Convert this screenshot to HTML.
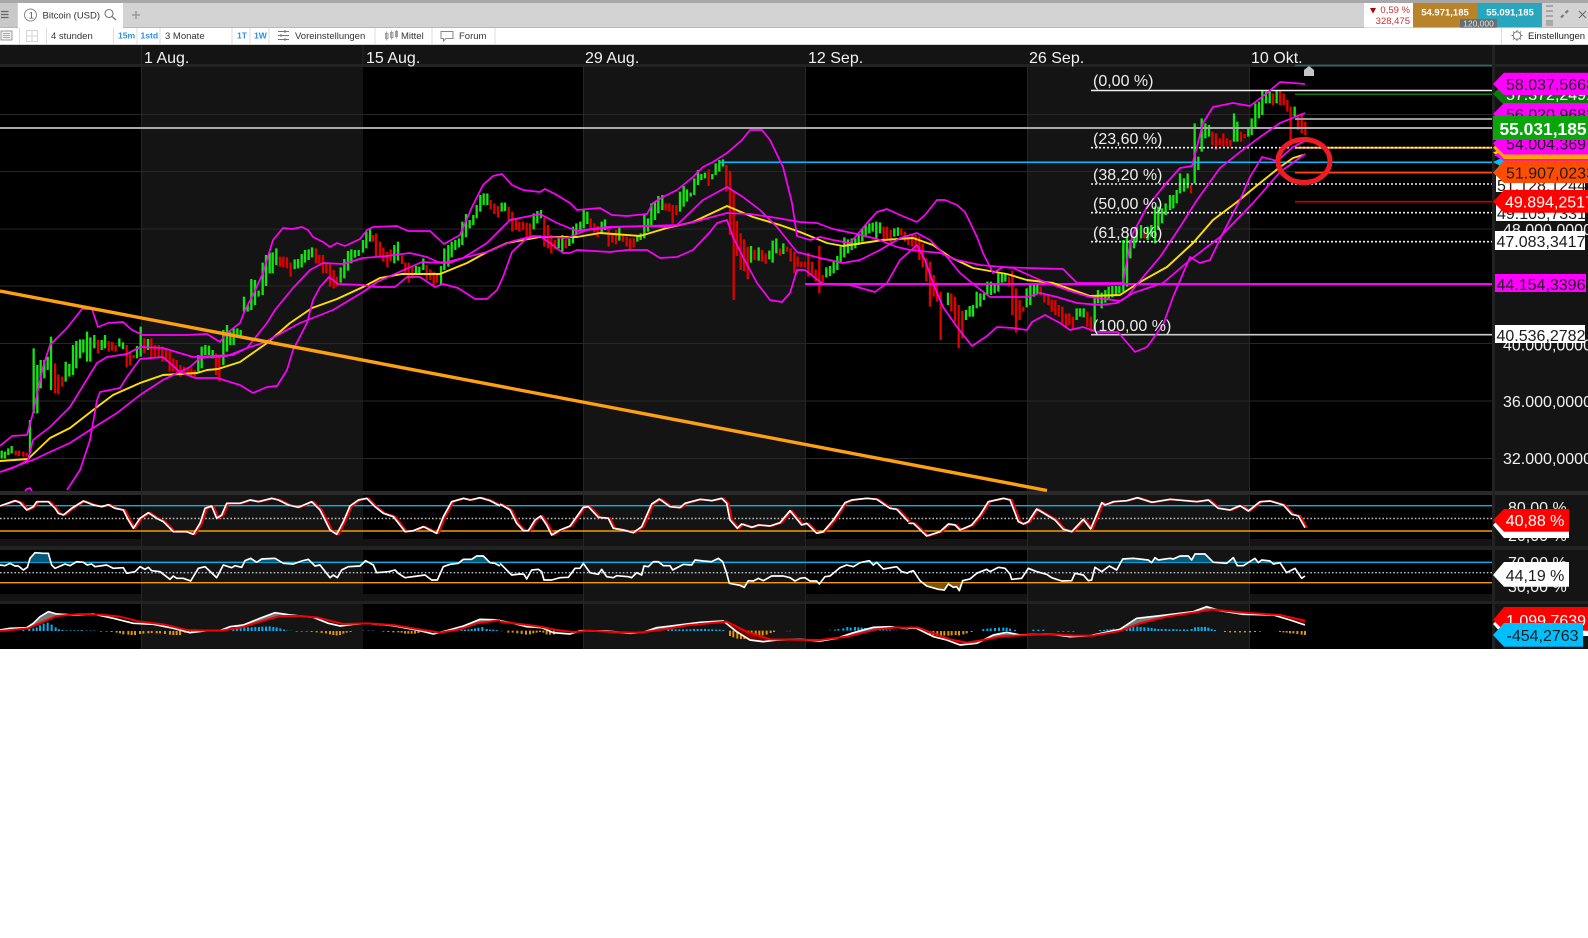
<!DOCTYPE html>
<html><head><meta charset="utf-8"><title>Bitcoin (USD)</title>
<style>
html,body{margin:0;padding:0;background:#fff;width:1588px;height:938px;overflow:hidden}
svg{position:absolute;left:0;top:0;display:block}
text{font-family:"Liberation Sans",Arial,sans-serif}
.t{font-size:9.5px;fill:#333}
.b{font-size:8.6px;fill:#2f8fe6;font-weight:bold}
.a{font-size:16px;fill:#f2f2f2}
.d{font-size:16px;fill:#1c1c1c}
.w{font-size:16px;fill:#fff}
.f{font-size:16px;fill:#eee}
</style></head><body>
<svg width="1588" height="938" viewBox="0 0 1588 938" xmlns="http://www.w3.org/2000/svg">
<defs>
<clipPath id="cb"><rect x="0" y="550" width="1492" height="12.3"/></clipPath>
<clipPath id="co"><rect x="0" y="582.7" width="1492" height="12"/></clipPath>
<polyline id="r1a" points="0,78 45,62 60,68 80,90 100,80 110,65 145,65 165,85 175,100 190,105 215,85 250,63 280,75 305,80 325,74 345,85 370,90 385,120 400,145 420,115 445,98 470,115 490,125 520,155 560,155 580,163 600,130 615,85 635,78 650,115 665,105 680,70 720,70 750,60 775,65 815,55 835,60 865,75 895,82 935,65 960,90 990,150 1010,163 1030,125 1050,78 1075,60 1100,55 1125,80 1150,100 1180,110 1215,155 1240,152 1270,140 1310,160 1330,110 1355,65 1390,55 1410,60 1440,53 1470,62 1500,78"/>
<polyline id="r1b" points="0,72 30,90 50,130 70,152 85,152 105,120 122,108 140,135 155,165 180,150 210,138 250,82 265,80 295,112 325,115 340,145 370,150 400,158 425,140 455,72 478,57 510,80 540,83 555,70 600,58 635,62 665,55 680,70 690,120 712,145 725,132 755,142 775,135 810,138 840,128 870,92 905,135 920,130 950,160 970,155 1000,120 1035,68 1055,60 1100,55 1130,58 1170,85 1190,88 1225,125"/>
<polyline id="r1c" points="25,130 40,130 80,168 120,155 145,132 165,135 180,150 215,135 240,105 265,65 310,55 330,60 355,125 370,132 385,125 410,87 465,120 490,148 515,155 550,118 572,147 605,68 615,75 640,65 680,62 712,53 755,67 810,58 890,65 925,60 955,85 990,90 1020,77 1045,93 1080,65 1110,63 1150,75 1175,103 1195,108 1215,143"/>
<polyline id="p2a" points="0,255 15,257 30,250 45,258 55,258 70,270 82,262 90,235 105,218 130,220 145,220 155,255 165,265 195,252 210,257 230,245 250,247 262,255 275,252 285,260 320,255 340,265 370,263 380,280 405,275 420,260 435,268 445,262 455,272 480,275 510,298 520,288 530,295 550,295 572,303 595,265 615,260 650,293 670,255 695,263 705,257 725,262 735,242 752,235 770,247 785,237 825,235 850,250 880,252 905,243 925,238 945,258 960,255 990,293 1000,285 1012,293 1025,270 1045,260 1080,258 1097,242 1120,255 1130,278 1165,275 1185,270 1195,280 1215,293 1275,285 1295,300 1312,300 1330,260 1350,253 1375,250 1390,238 1415,238 1430,228 1450,228 1470,248 1485,250 1500,258"/>
<polyline id="p2b" points="0,250 15,265 35,285 60,282 72,283 80,297 95,270 115,268 125,275 132,300 155,300 180,293 205,292 225,265 240,265 250,250 270,278 295,283 305,268 320,290 340,293 350,287 385,290 395,293 410,278 425,285 432,258 445,260 460,245 475,245 490,257 510,257 518,270 550,253 575,255 585,240 610,243 635,245 655,235 668,245 680,280 688,310 720,316 733,322 745,302 760,303 775,295 790,302 815,288 850,288 870,293 885,303 900,295 915,293 930,303 950,303 958,312 975,290 990,288 1020,263 1040,255 1060,260 1080,248 1108,242 1120,255 1130,247 1150,267 1190,260 1205,275 1225,280"/>
<polyline id="p2c" points="25,277 40,272 60,302 80,318 115,328 133,330 145,312 160,322 170,320 178,332 188,302 210,297 230,280 260,268 270,275 295,262 315,265 330,282 335,298 365,295 385,265 410,275 440,283 455,293 485,303 515,302 525,280 550,285 565,302 575,300 585,262 605,275 628,258 650,270 668,237 700,235 745,240 755,248 765,233 775,240 810,235 820,237 840,228 865,228 875,240 885,222 915,222 940,247 980,250 1000,233 1012,257 1030,257 1065,235 1075,248 1085,240 1110,243 1120,252 1140,248 1160,278 1185,265 1205,295 1215,288"/>
</defs>

<!-- top strip -->
<rect x="0" y="0" width="1588" height="3" fill="#a8a8a8"/>
<rect x="0" y="3" width="1588" height="24" fill="#d3d3d3"/>
<rect x="0" y="27" width="1588" height="1" fill="#b8b8b8"/>
<rect x="0" y="28" width="1588" height="16" fill="#fff"/>
<rect x="0" y="44" width="1588" height="1" fill="#cfcfcf"/>
<rect x="0" y="3" width="17" height="24" fill="#c9c9c9"/>
<path d="M1 11.5H8.5M1 14.5H8.5M1 17.5H8.5" stroke="#666" stroke-width="1.2"/>
<rect x="18" y="3" width="105" height="25" fill="#fff"/>
<circle cx="30.5" cy="15" r="6" fill="none" stroke="#888" stroke-width="1"/>
<text x="28.6" y="18.5" style="font-size:9.5px;fill:#555">1</text>
<text x="42.5" y="18.5" class="t">Bitcoin (USD)</text>
<circle cx="109" cy="13.5" r="4" fill="none" stroke="#777" stroke-width="1.1"/>
<path d="M112 16.5L116 20" stroke="#777" stroke-width="1.2"/>
<path d="M132 15H140M136 11V19" stroke="#999" stroke-width="1.5"/>

<!-- second row -->
<rect x="1" y="31" width="11" height="9" fill="#f2f2f2" stroke="#999" stroke-width="1"/>
<path d="M3 33.5H10M3 35.5H10M3 37.5H10" stroke="#aaa" stroke-width="1"/>
<path d="M19.5 28V44M46.5 28V44M113.5 28V44M137 28V44M160 28V44M232 28V44M250 28V44M269 28V44M375 28V44M432 28V44M495 28V44M1501.5 28V44" stroke="#dcdcdc" stroke-width="1"/>
<path d="M26.5 30.5H37.5V41.5H26.5ZM32 30.5V41.5M26.5 36H37.5" fill="none" stroke="#d4d4d4" stroke-width="1"/>
<text x="51" y="39" class="t">4 stunden</text>
<text x="118" y="38.5" class="b">15m</text>
<text x="140.5" y="38.5" class="b">1std</text>
<text x="165" y="39" class="t">3 Monate</text>
<text x="237" y="38.5" class="b">1T</text>
<text x="254" y="38.5" class="b">1W</text>
<path d="M278 31.5H289M278 35.5H289M278 39.5H289M285 30V33M281 34V37M285 38V41" stroke="#777" stroke-width="1" fill="none"/>
<text x="295" y="39" class="t">Voreinstellungen</text>
<path d="M385.5 33.5H388V38.5H385.5ZM390.5 32.5H393V37.5H390.5ZM395.5 31.5H397.5V36.5H395.5Z M386.7 31.5V40.5M391.7 30.5V39.5M396.5 30V38.5" fill="none" stroke="#888" stroke-width=".8"/>
<text x="401" y="39" class="t">Mittel</text>
<path d="M441 31.5H453V38.5H446L443.5 41V38.5H441Z" fill="none" stroke="#888" stroke-width="1"/>
<text x="459" y="39" class="t">Forum</text>

<!-- right top -->
<rect x="1364" y="3" width="49" height="24.5" fill="#fff"/>
<polygon points="1370,8 1376,8 1373,13.5" fill="#b00000"/>
<text x="1410" y="13" text-anchor="end" style="font-size:9.5px;fill:#c9302c">0,59 %</text>
<text x="1410" y="24" text-anchor="end" style="font-size:9.5px;fill:#c9302c">328,475</text>
<rect x="1413" y="3" width="64.5" height="24" fill="#b9832b"/>
<rect x="1477.5" y="3" width="64.5" height="24" fill="#27a6bd"/>
<text x="1445" y="15.5" text-anchor="middle" style="font-size:9.5px;font-weight:bold;fill:#fff">54.971,185</text>
<text x="1510" y="15.5" text-anchor="middle" style="font-size:9.5px;font-weight:bold;fill:#fff">55.091,185</text>
<rect x="1460" y="19" width="37" height="8.5" rx="1" fill="#666e72"/>
<text x="1478.5" y="26.5" text-anchor="middle" style="font-size:8.5px;fill:#e4e4e4">120,000</text>
<path d="M1546 6H1553M1546 11H1553M1546 16H1553M1546 21H1553" stroke="#8a8a8a" stroke-width="1.2"/>
<rect x="1546" y="22" width="7" height="4" fill="#aaa"/>
<path d="M1561 17.5L1563.5 15M1565.5 13L1568 10.5" stroke="#777" stroke-width="2.2" fill="none"/>
<path d="M1579 11L1586 18M1586 11L1579 18" stroke="#666" stroke-width="1"/>
<circle cx="1517" cy="35.5" r="3.8" fill="none" stroke="#777" stroke-width="1"/>
<path d="M1517 30V31.5M1517 39.5V41M1511.5 35.5H1513M1521 35.5H1522.5M1513 31.5L1514 32.5M1521 31.5L1520 32.5M1513 39.5L1514 38.5M1521 39.5L1520 38.5" stroke="#777" stroke-width="1"/>
<text x="1528" y="39" class="t" style="fill:#222">Einstellungen</text>

<!-- chart background -->
<rect x="0" y="45" width="1588" height="604" fill="#141414"/>
<rect x="0" y="64" width="1588" height="3" fill="#222"/>
<rect x="0" y="67" width="1492" height="424" fill="#000"/>
<rect x="0" y="495" width="1492" height="44" fill="#000"/>
<rect x="0" y="550" width="1492" height="44" fill="#000"/>
<rect x="0" y="604" width="1492" height="45" fill="#000"/>
<rect x="0" y="491" width="1588" height="4" fill="#2a2a2a"/>
<rect x="0" y="546" width="1588" height="4" fill="#222"/>
<rect x="0" y="601" width="1588" height="3" fill="#222"/>
<rect x="1492" y="45" width="3" height="604" fill="#222"/>
<!-- bands -->
<g fill="#141414">
<rect x="141" y="67" width="222" height="424"/><rect x="583" y="67" width="222" height="424"/><rect x="1027" y="67" width="222" height="424"/>
<rect x="141" y="495" width="222" height="44"/><rect x="583" y="495" width="222" height="44"/><rect x="1027" y="495" width="222" height="44"/>
<rect x="141" y="550" width="222" height="44"/><rect x="583" y="550" width="222" height="44"/><rect x="1027" y="550" width="222" height="44"/>
<rect x="141" y="604" width="222" height="45"/><rect x="583" y="604" width="222" height="45"/><rect x="1027" y="604" width="222" height="45"/>
</g>
<path d="M141.5 45V649M583.5 67V649M805.5 67V649M1027.5 67V649M1249.5 67V649M363 45V67" stroke="#262626" stroke-width="1"/>
<path d="M0 114.5H1492M0 171.5H1492M0 229H1492M0 286H1492M0 343.5H1492M0 401H1492M0 458.5H1492" stroke="#272727" stroke-width="1"/>

<!-- dates -->
<g style="font-size:16px" fill="#f2f2f2">
<text x="144" y="63" class="a">1 Aug.</text>
<text x="366" y="63" class="a">15 Aug.</text>
<text x="585" y="63" class="a">29 Aug.</text>
<text x="808" y="63" class="a">12 Sep.</text>
<text x="1029" y="63" class="a">26 Sep.</text>
<text x="1251" y="63" class="a">10 Okt.</text>
</g>

<!-- candles -->
<g fill="none" stroke-width="7">
<g transform="translate(0,280) scale(.33333)">
<path stroke="#12e512" d="M5 512V535M15 515V535M25 505V525M35 498V520M90 420V520M101 205V400M112 255V400M122 240V325M133 240V295M143 230V270M153 170V330M197 245V305M208 252V290M219 195V285M229 183V265M240 178V235M250 178V218M261 155V245M271 172V245M283 165V205M305 180V210M315 165V205M358 175V200M369 187V207M411 198V235M422 140V230M444 177V210M595 225V275M605 200V265M616 195V225M627 197V225M638 210V235M670 150V255M681 135V215M691 155V195M701 145V195M712 145V165M722 150V170"/>
<path stroke="#e00000" d="M47 512V525M57 512V528M70 515V530M80 518V530M165 250V340M175 283V343M187 290V320M294 180V220M326 183V215M336 185V212M347 195V215M380 195V262M390 220V255M401 225V235M433 175V220M454 175V235M465 195V230M476 195V235M487 200V245M498 205V245M509 215V275M520 235V275M530 240V285M541 255V290M552 260V285M563 262V278M574 265V290M584 270V295M648 220V285M658 225V305"/>
</g>
<g transform="translate(220,180) scale(.33333)">
<path stroke="#12e512" d="M72 350V395M83 375V395M94 297V390M105 300V375M116 332V350M128 248V345M138 225V318M149 218V280M158 217V280M169 205V255M224 238V267M234 237V265M245 222V262M255 210V248M266 208V240M276 202V232M362 262V308M373 237V295M384 213V272M394 208V250M405 210V233M416 210V228M429 180V218M439 155V205M450 148V185M523 195V250M534 185V242M588 258V285M598 260V280M610 235V270"/>
<path stroke="#e00000" d="M180 230V260M190 230V262M201 232V265M212 248V290M288 205V250M298 225V250M309 225V280M319 250V280M330 250V320M341 270V325M351 290V320M459 165V185M468 160V228M480 185V233M490 203V245M502 215V262M512 208V243M546 228V252M556 248V285M566 248V308M577 262V295M620 255V300M631 268V300M641 275V315M651 285V308"/>
</g>
<g transform="translate(400,110) scale(.33333)">
<path stroke="#12e512" d="M123 468V525M133 415V480M145 405V470M155 395V442M166 390V420M177 385V412M187 335V405M198 312V382M209 330V355M220 315V345M230 285V325M241 255V305M251 250V285M262 250V285M305 278V305M315 278V303M401 310V358M412 303V340M423 300V325M476 385V415M487 375V425M508 385V408M519 350V400M529 340V375M541 335V360M551 300V355M562 305V342M605 335V368M615 328V360M658 350V392M712 375V395M722 370V390M733 315V385M744 325V365M754 280V345M765 275V330M775 258V310M787 255V300M840 245V305M851 228V290M861 238V275M872 248V260M883 205V255M894 180V225M904 192V210M915 188V205M937 192V208M947 160V195M958 150V185M969 148V170M1053 408V458M1076 412V452M1108 422V448M1118 392V458M1129 385V430M1150 400V432"/>
<path stroke="#e00000" d="M272 270V298M283 280V312M294 288V322M326 290V330M337 305V365M348 325V360M358 335V365M369 335V360M380 338V385M390 340V378M433 322V410M444 345V415M454 375V430M465 390V418M497 390V415M572 325V358M583 340V368M593 348V382M626 360V410M637 370V398M648 360V403M669 375V395M680 380V410M690 385V418M701 385V412M797 280V302M808 280V305M818 285V340M829 285V315M926 178V228M979 165V245M990 183V375M1001 245V570M1011 333V438M1022 370V480M1032 388V483M1043 410V508M1064 420V450M1086 420V455M1097 430V462M1140 415V437M1161 410V425M1172 415V455M1183 425V490M1193 440V470M1204 455V472M1215 455V472M1225 428V500M1236 455V495M1247 478V515M1258 408V550"/>
</g>
<g transform="translate(800,180) scale(.33333)">
<path stroke="#12e512" d="M79 262V292M90 258V288M101 245V280M112 228V270M122 200V250M133 172V232M144 178V220M155 175V210M166 175V205M176 165V195M187 145V185M197 135V170M208 130V160M218 128V155M229 125V175M240 127V160M283 145V170M294 142V168M444 338V375M498 390V420M509 378V410M519 375V410M530 335V385M541 340V380M552 340V360M562 305V345M573 305V345M584 310V340M595 280V335M606 280V308M616 280V305M680 325V382M691 315V375M702 315V350M712 315V340M830 385V420M840 385V410M851 385V412M884 345V450M894 330V370M905 338V385M916 330V368M926 320V360M937 318V352M948 318V345M958 318V340M970 180V335M981 170V320M991 180V235M1002 170V205"/>
<path stroke="#e00000" d="M68 285V315M251 140V180M261 140V180M272 150V190M304 145V165M315 155V185M325 170V195M336 165V200M347 165V210M358 170V240M368 192V262M379 235V305M390 245V380M401 285V350M411 308V365M422 335V480M454 340V395M465 350V425M476 375V505M487 392V475M627 290V320M637 272V405M648 325V458M659 360V420M670 380V395M722 320V345M733 340V368M745 345V375M755 358V395M766 360V405M776 375V410M787 380V430M798 400V445M808 400V435M819 410V450M862 395V440M873 410V455"/>
</g>
<g transform="translate(1080,60) scale(.33333)">
<path stroke="#12e512" d="M170 500V545M183 495V535M203 500V540M214 495V530M225 440V550M235 440V510M246 445V490M257 430V465M270 405V450M280 405V445M290 390V430M300 340V400M312 355V395M323 340V385M344 190V370M355 290V330M365 175V275M376 190V235M387 195V230M462 160V245M472 185V245M505 205V230M515 175V225M526 130V205M537 125V175M547 90V165M558 95V130M569 95V130M590 92V130M644 140V170"/>
<path stroke="#e00000" d="M193 515V535M333 375V400M397 215V255M408 220V270M419 235V255M430 220V260M441 235V260M451 240V260M483 215V245M494 222V235M579 100V135M600 92V135M611 100V135M622 120V155M632 140V240M654 165V210M665 160V220M676 185V225"/>
</g>
</g>

<!-- levels -->
<path d="M1295 65.5H1492" stroke="#1d6a78" stroke-width="1.5"/>
<path d="M0 128H1492" stroke="#aaa" stroke-width="2"/>
<path d="M1295 119H1492" stroke="#999" stroke-width="2"/>
<path d="M1091 90.5H1492" stroke="#eee" stroke-width="1.5"/>
<path d="M1295 94.3H1492" stroke="#0b7a0b" stroke-width="1.5"/>
<path d="M1295 147.7H1492" stroke="#ffa500" stroke-width="2"/>
<path d="M1091 147.7H1492M1091 184H1492M1091 212.7H1492M1091 241.7H1492" stroke="#eee" stroke-width="1.6" stroke-dasharray="2 2"/>
<path d="M1091 334.7H1492" stroke="#ccc" stroke-width="1.6"/>
<path d="M720 162.3H1492" stroke="#00bfff" stroke-width="1.5"/>
<path d="M1295 172.7H1492" stroke="#ff4500" stroke-width="1.6"/>
<path d="M1295 201.7H1492" stroke="#cc0000" stroke-width="1.6"/>
<path d="M805 284H1492" stroke="#ff00ff" stroke-width="2"/>

<!-- indicator lines -->
<g fill="none" stroke-linejoin="round">
<polyline stroke="#ffdf00" stroke-width="1.9" points="0,461 28,459 50,438 70,428 97,407 113,395 140,383 163,375 197,373 207,370 218,369 240,362 267,343 290,323 312,308 337,299 363,287 380,278 402,274 440,274 467,263 487,252 507,243 540,237 577,237 600,233 640,236 667,228 693,222 727,206 753,217 780,225 800,232 827,243 843,246 883,240 913,238 933,245 950,257 973,268 1007,274 1027,280 1053,283 1090,296 1120,295 1140,282 1167,267 1193,243 1213,220 1237,202 1260,183 1280,167 1293,158 1303,155"/>
<g stroke="#ff00ff" stroke-width="1.7">
<polyline points="0,446 12,436 27,435 33,413 43,367 50,345 67,328 82,309 92,309 98,327 108,323 123,322 132,330 143,335 167,335 187,335 207,334 220,342 227,333 240,323 245,310 253,295 263,273 273,240 283,228 292,229 302,227 308,230 313,237 323,242 330,247 337,243 345,246 360,239 367,230 373,227 397,226 408,231 430,231 444,244 460,235 472,207 483,185 493,176 502,174 512,185 523,190 540,192 545,189 555,194 570,203 577,210 600,208 612,215 627,216 647,214 653,203 663,197 677,190 693,177 703,167 713,162 727,153 742,140 750,130 762,130 770,140 783,167 792,203 797,236 810,240 820,237 833,240 850,243 857,235 867,223 877,212 887,209 900,215 917,222 925,215 937,200 945,200 957,205 965,212 977,237 983,253 993,273 1003,267 1027,268 1063,269 1077,283 1097,283 1123,283 1127,260 1133,233 1147,207 1163,187 1180,168 1192,166 1203,123 1213,107 1233,103 1250,106 1267,93 1280,82 1293,83 1305,84"/>
<polyline points="0,472 13,468 28,460 33,440 50,427 70,407 97,363 107,357 127,354 140,347 163,348 193,357 213,356 233,355 247,348 267,323 275,310 293,288 310,270 323,263 343,264 363,258 387,256 410,253 427,257 438,262 450,263 463,258 487,243 510,220 540,214 557,223 577,231 607,227 647,226 677,225 703,200 727,187 743,197 760,210 777,227 797,252 820,258 843,263 860,260 880,250 900,238 917,233 930,240 947,257 960,273 977,287 990,297 1027,297 1040,293 1057,297 1077,303 1100,305 1117,303 1127,297 1138,283 1160,257 1180,227 1197,200 1220,168 1240,152 1260,137 1280,123 1295,117 1305,113"/>
<polyline points="0,472 33,460 50,452 70,443 93,428 117,413 140,395 163,380 190,367 200,358 227,356 247,348 263,343 300,323 333,310 363,292 377,282 397,273 422,262 443,263 463,258 487,252 510,242 533,236 567,238 587,230 617,227 647,226 667,227 690,223 727,213 750,214 777,218 800,222 817,223 833,229 857,234 877,239 897,247 910,250 940,253 957,260 980,265 1013,268 1040,280 1067,290 1090,297 1120,301 1133,293 1163,283 1190,260 1220,237 1253,203 1280,172 1305,154"/>
<polyline points="67,490 80,470 90,440 97,400 100,392 120,388 127,377 140,359 163,357 180,372 195,378 217,378 240,385 253,393 267,387 277,386 287,370 293,350 307,323 313,300 320,287 329,277 338,284 363,285 375,287 395,287 407,277 420,277 435,287 443,284 458,288 475,299 487,299 497,290 503,277 512,252 527,238 540,236 550,243 563,253 570,253 577,250 610,252 627,250 647,250 660,258 677,257 693,250 710,232 717,223 727,220 733,237 743,257 757,283 770,300 782,302 790,293 797,270 805,270 823,284 850,285 875,292 887,283 900,260 917,245 925,260 933,283 943,307 957,327 972,346 987,336 997,327 1013,328 1027,330 1032,322 1045,315 1060,323 1070,330 1083,327 1097,332 1118,332 1135,352 1147,347 1163,325 1173,297 1190,257 1200,263 1210,260 1223,233 1240,200 1250,177 1262,157 1277,161 1293,147 1305,141"/>
<polyline points="25,491 27,489 30,488 32,491"/>
</g>
</g>

<!-- trend line -->
<line x1="0" y1="291" x2="1047" y2="490.5" stroke="#ffa012" stroke-width="3.4"/>

<!-- fib labels -->
<text x="1093" y="86" class="f">(0,00 %)</text>
<text x="1093" y="144" class="f">(23,60 %)</text>
<text x="1093" y="180" class="f">(38,20 %)</text>
<text x="1093" y="209" class="f">(50,00 %)</text>
<text x="1093" y="238" class="f">(61,80 %)</text>
<text x="1093" y="331" class="f">(100,00 %)</text>

<!-- marker and circle -->
<polygon points="1304,76 1304,70 1309,66 1314,70 1314,76" fill="#c4c4c4"/>
<ellipse cx="1304" cy="161" rx="26" ry="21.5" fill="none" stroke="#ee1c25" stroke-width="5"/>

<!-- lower panel guides -->
<path d="M0 505.7H1492M0 562.3H1492" stroke="#00b4ee" stroke-width="1.4"/>
<path d="M0 531H1492M0 582.7H1492" stroke="#f59a00" stroke-width="1.4"/>
<path d="M0 518.5H1492M0 572.7H1492" stroke="#bbb" stroke-width="1.4" stroke-dasharray="1.6 2"/>

<!-- panel 1 -->
<g fill="none" stroke-linejoin="round" stroke-width="5.5">
<g transform="translate(0,480) scale(.33333)"><use href="#r1a" x="6" stroke="#f00000"/><use href="#r1a" stroke="#fff" stroke-width="5"/></g>
<g transform="translate(500,480) scale(.33333)"><use href="#r1b" x="6" stroke="#f00000"/><use href="#r1b" stroke="#fff" stroke-width="5"/></g>
<g transform="translate(900,480) scale(.33333)"><use href="#r1c" x="6" stroke="#f00000"/><use href="#r1c" stroke="#fff" stroke-width="5"/></g>
</g>

<!-- panel 2 -->
<g clip-path="url(#cb)" fill="#005a7a">
<use href="#p2a" transform="translate(0,480) scale(.33333)"/><use href="#p2b" transform="translate(500,480) scale(.33333)"/><use href="#p2c" transform="translate(900,480) scale(.33333)"/>
</g>
<g clip-path="url(#co)" fill="#7a5200">
<use href="#p2a" transform="translate(0,480) scale(.33333)"/><use href="#p2b" transform="translate(500,480) scale(.33333)"/><use href="#p2c" transform="translate(900,480) scale(.33333)"/>
</g>
<g fill="none" stroke="#fff" stroke-width="5" stroke-linejoin="round">
<use href="#p2a" transform="translate(0,480) scale(.33333)"/><use href="#p2b" transform="translate(500,480) scale(.33333)"/><use href="#p2c" transform="translate(900,480) scale(.33333)"/>
</g>

<!-- panel 3 -->
<g transform="translate(0,480) scale(.33333)">
<polygon fill="#777" points="85,443 100,430 120,410 145,395 170,402 170,408 130,425 85,445"/>
<polygon fill="#777" points="690,440 730,435 780,415 825,398 870,405 840,408 780,425 720,443"/>
<polygon fill="#777" points="1390,438 1440,418 1500,420 1430,430 1380,448"/>
<path fill="none" stroke-width="6" stroke="#00aeef" d="M70 453V450M88 453V447M100 453V445M110 453V442M120 453V436M131 453V431M143 453V428M155 453V434M167 453V442M177 453V448M187 453V450M200 453V451M212 453V451M223 453V451M234 453V451M245 453V450M700 453V448M711 453V447M722 453V445M733 453V443M744 453V442M755 453V442M766 453V441M777 453V441M787 453V440M798 453V440M809 453V439M820 453V441M830 453V442M841 453V445M852 453V449M1385 453V450M1395 453V449M1405 453V448M1415 453V447M1425 453V445M1435 453V443M1447 453V441M1460 453V447M1470 453V449M1480 453V449M1490 453V450"/>
<path fill="none" stroke-width="6" stroke="#0a4a5a" d="M260 453V450M272 453V450M283 453V450M862 453V450M872 453V451M1090 453V450M1105 453V450M1118 453V450"/>
<path fill="none" stroke-width="6" stroke="#e09500" d="M303 453V455M320 453V455M335 453V456M350 453V458M360 453V460M370 453V463M385 453V464M395 453V465M405 453V465M420 453V462M430 453V461M445 453V460M455 453V459M470 453V460M480 453V460M495 453V462M510 453V464M520 453V465M530 453V465M540 453V465M555 453V458M565 453V458M575 453V456M890 453V455M905 453V455M920 453V455M935 453V456M950 453V457M965 453V459M978 453V460M990 453V463M1000 453V465M1010 453V466M1020 453V465M1030 453V461M1040 453V458M1052 453V456M1150 453V455M1165 453V456M1180 453V457M1195 453V457M1205 453V458M1215 453V461M1225 453V461M1235 453V461M1245 453V461M1255 453V459"/>
<polyline fill="none" stroke="#fff" stroke-width="5" stroke-linejoin="round" points="0,450 30,445 80,443 100,430 120,410 145,395 170,402 220,405 280,402 340,415 400,430 460,433 520,445 570,458 620,452 660,452 690,440 730,435 780,415 825,398 870,405 940,412 985,430 1020,438 1060,433 1100,430 1180,437 1250,450 1300,462 1340,452 1390,438 1440,418 1500,420"/>
<polyline fill="none" stroke="#f00000" stroke-width="6" stroke-linejoin="round" points="0,453 50,448 85,445 130,425 170,408 240,402 300,404 360,410 420,425 490,433 560,450 620,452 665,452 720,443 780,425 840,408 900,408 950,412 1030,432 1100,430 1180,435 1250,447 1320,458 1380,448 1430,430 1500,420"/>
</g>
<g transform="translate(500,480) scale(.33333)">
<polygon fill="#777" points="440,452 470,443 520,437 600,427 560,436 490,448"/>
<polygon fill="#777" points="1000,475 1060,458 1120,442 1170,440 1130,448 1040,470"/>
<path fill="none" stroke-width="6" stroke="#e09500" d="M25 452V458M38 452V458M52 452V460M65 452V462M78 452V464M90 452V463M100 452V460M110 452V458M120 452V456M130 452V458M140 452V463M150 452V464M162 452V463M690 452V468M700 452V472M712 452V476M723 452V477M733 452V477M745 452V475M755 452V472M767 452V468M778 452V466M788 452V466M800 452V464M812 452V459M822 452V456"/>
<path fill="none" stroke-width="6" stroke="#00aeef" d="M505 448V453M516 448V453M527 448V453M538 448V453M549 448V453M560 448V453M571 448V453M582 447V453M593 447V453M604 447V453M615 447V453M626 448V453M637 448V453M648 449V453M659 449V453M670 450V453M1005 452V449M1015 452V447M1030 452V445M1042 452V441M1052 452V443M1065 452V441M1075 452V442M1085 452V443M1095 452V444M1105 452V445M1115 452V446M1127 452V446M1140 452V447M1150 452V448M1160 452V449M1170 452V449"/>
<path fill="none" stroke-width="6" stroke="#0a4a5a" d="M5 452V455M860 452V455M870 452V455M990 452V449M1180 452V449M1190 452V450"/>
<polygon fill="#7a0000" points="680,425 740,455 810,478 830,480 790,485 750,480 710,455"/>
<polyline fill="none" stroke="#fff" stroke-width="5" stroke-linejoin="round" points="0,422 40,430 80,440 125,443 160,458 210,462 240,452 320,453 390,460 430,457 470,443 520,437 600,427 670,423 710,455 750,480 790,485 830,480 900,478 960,483 1010,475 1060,458 1120,442 1170,440 1225,446"/>
<polyline fill="none" stroke="#f00000" stroke-width="6" stroke-linejoin="round" points="0,425 60,432 120,440 170,450 220,456 270,452 340,456 420,458 490,448 560,436 680,425 740,455 810,478 960,480 1040,470 1130,448 1190,442 1225,444"/>
</g>
<g transform="translate(900,480) scale(.33333)">
<polygon fill="#7a0000" points="55,443 100,460 150,478 200,488 180,495 140,480 100,470"/>
<polygon fill="#777" points="230,490 280,465 320,457 360,465 300,470 250,480"/>
<polygon fill="#777" points="660,448 710,415 780,407 880,395 920,380 960,392 935,388 880,398 800,410 720,430 660,453"/>
<polygon fill="#6a0000" points="1140,405 1215,422 1215,435 1170,420"/>
<path fill="none" stroke-width="6" stroke="#e09500" d="M90 453V464M100 453V466M112 453V468M123 453V467M133 453V467M145 453V467M155 453V466M167 453V465M177 453V466M190 453V463M200 453V460M215 453V456M975 453V456M990 453V457M1005 453V457M1020 453V457M1035 453V457M1050 453V457M1065 453V456M1080 453V455M1140 453V456M1150 453V457M1160 453V458M1170 453V460M1180 453V460M1192 453V462M1205 453V464M1215 453V465M475 453V455M490 453V455M505 453V455M520 453V455"/>
<path fill="none" stroke-width="6" stroke="#00aeef" d="M250 453V447M262 453V446M272 453V445M285 453V444M297 453V443M310 453V443M320 453V443M330 453V446M345 453V450M400 453V449M415 453V449M430 453V449M600 453V450M612 453V450M622 453V448M632 453V448M640 453V446M680 453V442M690 453V440M700 453V440M712 453V440M722 453V441M733 453V442M745 453V443M755 453V444M765 453V446M775 453V447M785 453V447M797 453V447M808 453V448M820 453V447M830 453V448M840 453V449M852 453V448M862 453V449M875 453V447M885 453V442M895 453V441M905 453V441M915 453V441M925 453V443M935 453V447M945 453V450"/>
<polyline fill="none" stroke="#fff" stroke-width="5" stroke-linejoin="round" points="25,444 50,445 100,470 140,480 180,495 230,490 280,465 320,457 360,465 450,462 510,470 570,467 660,448 710,415 780,407 880,395 920,380 960,392 1030,403 1120,405 1170,420 1215,435"/>
<polyline fill="none" stroke="#f00000" stroke-width="6" stroke-linejoin="round" points="25,442 55,443 100,460 150,478 200,488 250,480 300,470 360,466 450,462 520,467 580,467 660,453 720,430 800,410 880,398 935,388 1020,397 1140,405 1215,422"/>
</g>

<!-- axis plain labels -->
<text x="1503" y="235" class="a">48.000,0000</text>
<text x="1503" y="350.5" class="a">40.000,0000</text>
<text x="1503" y="407" class="a">36.000,0000</text>
<text x="1503" y="464" class="a">32.000,0000</text>
<text x="1508" y="513" class="a">80,00 %</text>
<text x="1508" y="541" class="a">20,00 %</text>
<text x="1508" y="568" class="a">70,00 %</text>
<text x="1508" y="592" class="a">30,00 %</text>

<!-- right tags -->
<polygon points="1493,94 1504,83 1588,83 1588,105 1504,105" fill="#0b7a0b"/>
<text x="1506" y="100" class="w">57.372,2491</text>
<polygon points="1493,84 1504,72.7 1588,72.7 1588,95 1504,95" fill="#ff00ff"/>
<text x="1506" y="90" class="d">58.037,5668</text>
<polygon points="1493,114 1504,103 1588,103 1588,125 1504,125" fill="#ff00ff"/>
<text x="1506" y="120" class="d">56.020,9682</text>
<polygon points="1493,162 1504,157 1588,157 1588,168 1504,168" fill="#00bfff"/>
<polygon points="1493,152.5 1504,148 1588,148 1588,160 1504,160" fill="#ffdf00"/>
<polygon points="1494,155 1504,150 1588,150 1588,161 1504,161" fill="#ff00ff"/>
<polygon points="1493,147.7 1504,137 1588,137 1588,159 1504,159" fill="#ffa500"/>
<polygon points="1493,143.5 1504,132 1588,132 1588,154.5 1504,154.5" fill="#ff00ff"/>
<text x="1506" y="149.5" class="d">54.004,369</text>
<rect x="1493" y="116" width="95" height="24" fill="#0aa50a"/>
<text x="1499.5" y="135" style="font-size:17.4px;font-weight:bold;fill:#fff">55.031,185</text>
<rect x="1496" y="175" width="89" height="17" fill="#fff"/>
<text x="1497" y="191" class="d">51.128,1244</text>
<rect x="1496" y="204" width="89" height="17" fill="#fff"/>
<text x="1497" y="219" class="d">49.105,7331</text>
<polygon points="1493,172.7 1504,160.5 1588,160.5 1588,183 1504,183" fill="#ff4c00"/>
<text x="1506" y="178.5" class="d">51.907,0233</text>
<polygon points="1493,201.7 1504,190 1588,190 1588,212.7 1504,212.7" fill="#ff0000"/>
<text x="1505" y="207.5" class="w">49.894,2517</text>
<rect x="1495" y="231" width="90" height="19" fill="#fff"/>
<text x="1496.5" y="247" class="d">47.083,3417</text>
<rect x="1495" y="274" width="91" height="18" fill="#ff00ff"/>
<text x="1496.5" y="290" class="d">44.154,3396</text>
<rect x="1495" y="325" width="90" height="18" fill="#fff"/>
<text x="1496.5" y="341" class="d">40.536,2782</text>

<polygon points="1493,525 1504,514 1569,514 1569,538 1504,538" fill="#fff"/>
<polygon points="1493,520 1504,509 1569,509 1569,531.7 1504,531.7" fill="#ff0000"/>
<text x="1505.7" y="526" class="w">40,88 %</text>
<polygon points="1493,575 1504,562 1569,562 1569,586.7 1504,586.7" fill="#fff"/>
<text x="1505.7" y="581" class="d">44,19 %</text>

<polygon points="1493,624 1504,613 1588,613 1588,636 1504,636" fill="#fff"/>
<polygon points="1493,620 1504,607 1588,607 1588,630.7 1504,630.7" fill="#ff0000"/>
<text x="1506" y="626" class="w">1.099,7639</text>
<polygon points="1493,635 1504,623 1583,623 1583,646.7 1504,646.7" fill="#00bfff"/>
<text x="1506.5" y="641" class="d">-454,2763</text>

<rect x="0" y="649" width="1588" height="289" fill="#fff"/>
</svg>
</body></html>
